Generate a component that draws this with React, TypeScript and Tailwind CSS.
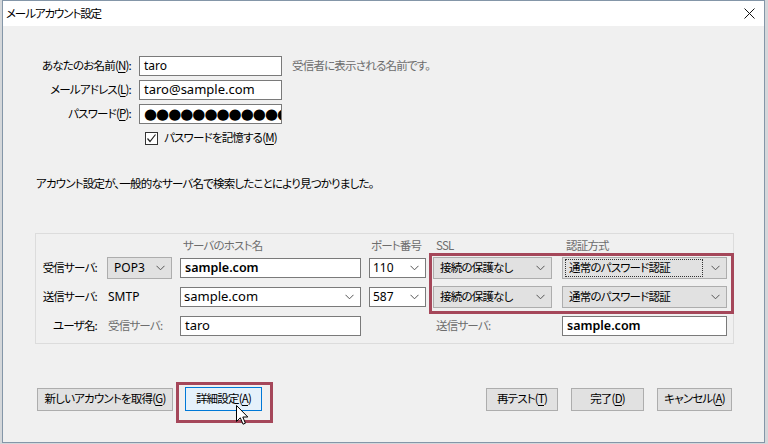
import type { ReactNode } from 'react';

const jp = "font-['Noto_Sans_CJK_JP',sans-serif] [font-feature-settings:'palt'] tracking-[-0.8px]";
const latin = "font-['Noto_Sans','Noto_Sans_CJK_JP',sans-serif] tracking-normal";

function Chevron() {
  return (
    <svg width="9" height="6" viewBox="0 0 9 6" className="shrink-0">
      <polyline points="0.5,0.8 4.5,4.8 8.5,0.8" fill="none" stroke="#555" strokeWidth="1" />
    </svg>
  );
}

function Key({ k }: { k: string }) {
  return <span className="underline underline-offset-2">{k}</span>;
}

function TextBox({ children, className = '' }: { children?: ReactNode; className?: string }) {
  return (
    <div className={`h-[20px] bg-white border border-[#7a7a7a] flex items-center pl-[4px] overflow-hidden whitespace-nowrap ${className}`}>
      {children}
    </div>
  );
}

function GraySelect({ children, className = '', focus = false }: { children: ReactNode; className?: string; focus?: boolean }) {
  return (
    <div className={`h-[22px] bg-[#e1e1e1] border border-[#adadad] flex items-center pl-[2px] pr-[6px] ${className}`}>
      <div className={`flex-1 h-[18px] flex items-center pl-[3px] whitespace-nowrap ${focus ? 'border border-dotted border-[#333]' : 'border border-transparent'}`}>
        {children}
      </div>
      <div className="ml-[8px]"><Chevron /></div>
    </div>
  );
}

function WhiteSelect({ children, className = '' }: { children: ReactNode; className?: string }) {
  return (
    <div className={`h-[20px] bg-white border border-[#7a7a7a] flex items-center pl-[3px] pr-[6px] ${className}`}>
      <div className="flex-1 whitespace-nowrap">{children}</div>
      <Chevron />
    </div>
  );
}

function Button({ children, className = '' }: { children: ReactNode; className?: string }) {
  return (
    <div className={`h-[23px] bg-[#e1e1e1] border border-[#adadad] flex items-center justify-center whitespace-nowrap ${className}`}>
      {children}
    </div>
  );
}

export default function App() {
  return (
    <div className={`w-[768px] h-[444px] bg-[#d4d7da] overflow-hidden text-[11.5px] text-black whitespace-nowrap ${jp}`}>
      <div className="ml-[2px] w-[763px] h-[443px] border border-[#8496a8] bg-[#f0f0f0] flex flex-col">
        {/* title bar */}
        <div className="h-[25px] bg-white flex items-center justify-between pl-[3px] pr-[9px]">
          <span className="text-[11.5px] tracking-[-1.1px]">メールアカウント設定</span>
          <svg width="11" height="11" viewBox="0 0 11 11">
            <path d="M0.5 0.5 L10.5 10.5 M10.5 0.5 L0.5 10.5" stroke="#111" strokeWidth="1" />
          </svg>
        </div>

        <div className="flex flex-col pt-[30px]">
          {/* identity rows */}
          <div className="flex flex-col gap-[4px]">
            <div className="flex items-center h-[20px]">
              <div className="w-[128px] text-right">あなたのお名前(<Key k="N" />):</div>
              <TextBox className={`ml-[8px] w-[143px] text-[12px] ${latin}`}>taro</TextBox>
              <span className="ml-[10px] text-[#6d6d6d]">受信者に表示される名前です。</span>
            </div>
            <div className="flex items-center h-[20px]">
              <div className="w-[128px] text-right">メールアドレス(<Key k="L" />):</div>
              <TextBox className={`ml-[8px] w-[143px] text-[13px] ${latin}`}>taro@sample.com</TextBox>
            </div>
            <div className="flex items-center h-[20px]">
              <div className="w-[128px] text-right">パスワード(<Key k="P" />):</div>
              <TextBox className="ml-[8px] w-[143px] text-[15px] font-['DejaVu_Sans',sans-serif] tracking-[-1px] leading-none">
                ●●●●●●●●●●●●●
              </TextBox>
            </div>
          </div>

          <div className="mt-[4px] h-[20px] flex items-center pl-[142px]">
            <div className="w-[13px] h-[13px] border border-[#333] bg-white flex items-center justify-center">
              <svg width="11" height="11" viewBox="0 0 11 11">
                <polyline points="1.5,5.5 4,8.5 9.5,1.5" fill="none" stroke="#222" strokeWidth="1.2" />
              </svg>
            </div>
            <span className="ml-[6px]">パスワードを記憶する(<Key k="M" />)</span>
          </div>

          <div className="mt-[28px] h-[16px] flex items-center pl-[33px]">
            アカウント設定が、一般的なサーバ名で検索したことにより見つかりました。
          </div>

          {/* server group */}
          <div className="relative mt-[41px] ml-[32px] w-[699px] h-[111px] border border-[#dcdcdc] flex flex-col pt-[4px]">
            <div className="flex items-center h-[16px] text-[#6d6d6d]">
              <div className="w-[61px]" />
              <div className="ml-[10px] w-[65px]" />
              <div className="ml-[8px] w-[181px] pl-[3px]">サーバのホスト名</div>
              <div className="ml-[8px] w-[57px] pl-[2px]">ポート番号</div>
              <div className="ml-[7px] w-[119px] pl-[3px]">SSL</div>
              <div className="ml-[10px] w-[165px] pl-[4px]">認証方式</div>
            </div>

            <div className="mt-[3px] flex items-center h-[22px]">
              <div className="w-[61px] text-right">受信サーバ:</div>
              <GraySelect className={`ml-[10px] w-[65px] ${latin} text-[12px]`}>POP3</GraySelect>
              <TextBox className={`ml-[8px] w-[181px] text-[12.5px] font-semibold ${latin}`}>sample.com</TextBox>
              <WhiteSelect className={`ml-[8px] w-[57px] ${latin} text-[12px]`}>110</WhiteSelect>
              <GraySelect className="ml-[7px] w-[119px]">接続の保護なし</GraySelect>
              <GraySelect className="ml-[10px] w-[165px]" focus>通常のパスワード認証</GraySelect>
            </div>

            <div className="mt-[7px] flex items-center h-[22px]">
              <div className="w-[61px] text-right">送信サーバ:</div>
              <div className={`ml-[10px] w-[65px] pl-[1px] ${latin} text-[12px]`}>SMTP</div>
              <WhiteSelect className={`ml-[8px] w-[181px] text-[13px] ${latin}`}>sample.com</WhiteSelect>
              <WhiteSelect className={`ml-[8px] w-[57px] ${latin} text-[12px]`}>587</WhiteSelect>
              <GraySelect className="ml-[7px] w-[119px]">接続の保護なし</GraySelect>
              <GraySelect className="ml-[10px] w-[165px]">通常のパスワード認証</GraySelect>
            </div>

            <div className="mt-[7px] flex items-center h-[22px]">
              <div className="w-[61px] text-right">ユーザ名:</div>
              <div className="ml-[10px] w-[65px] pl-[1px] text-[#6d6d6d]">受信サーバ:</div>
              <TextBox className={`ml-[8px] w-[181px] text-[13px] ${latin}`}>taro</TextBox>
              <div className="ml-[8px] w-[57px]" />
              <div className="ml-[7px] w-[119px] pl-[3px] text-[#6d6d6d]">送信サーバ:</div>
              <TextBox className={`ml-[10px] w-[165px] text-[12.5px] font-semibold ${latin}`}>sample.com</TextBox>
            </div>

            {/* annotation */}
            <div className="absolute left-[393px] top-[19px] w-[305px] h-[61px] border-[3px] border-[#a5475a]" />
          </div>

          {/* buttons */}
          <div className="mt-[43px] flex items-center pl-[34px] pr-[32px]">
            <Button className="w-[136px]">新しいアカウントを取得(<Key k="G" />)</Button>
            <div className="relative ml-[12px]">
              <div className="h-[24px] w-[77px] bg-[#e5f1fb] border border-[#0078d7] flex items-center justify-center whitespace-nowrap">
                詳細設定(<Key k="A" />)
              </div>
              <div className="absolute left-[-9px] top-[-5px] w-[97px] h-[41px] border-[3px] border-[#a5475a]" />
              <svg className="absolute left-[51px] top-[18px]" width="13" height="21" viewBox="0 0 13 21">
                <path d="M0.5 0.5 L0.5 16.5 L4.3 12.8 L7 19.2 L9.4 18.2 L6.8 12 L11.8 12 Z" fill="#fff" stroke="#000" strokeWidth="1" strokeLinejoin="round" />
              </svg>
            </div>
            <div className="flex-1" />
            <Button className="w-[72px]">再テスト(<Key k="T" />)</Button>
            <Button className="ml-[13px] w-[73px]">完了(<Key k="D" />)</Button>
            <Button className="ml-[13px] w-[75px]">キャンセル(<Key k="A" />)</Button>
          </div>
        </div>
      </div>
    </div>
  );
}
